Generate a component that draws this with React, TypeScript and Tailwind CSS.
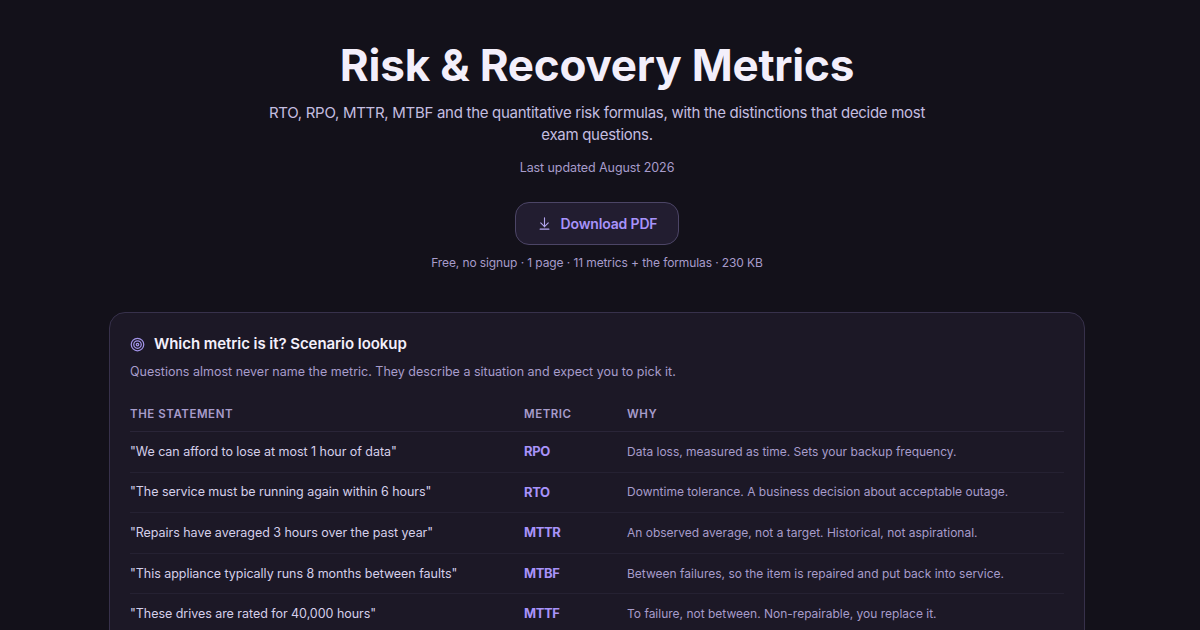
import { ArrowDownToLine, Target } from "lucide-react";

const rows = [
  ['"We can afford to lose at most 1 hour of data"', "RPO", "Data loss, measured as time. Sets your backup frequency."],
  ['"The service must be running again within 6 hours"', "RTO", "Downtime tolerance. A business decision about acceptable outage."],
  ['"Repairs have averaged 3 hours over the past year"', "MTTR", "An observed average, not a target. Historical, not aspirational."],
  ['"This appliance typically runs 8 months between faults"', "MTBF", "Between failures, so the item is repaired and put back into service."],
  ['"These drives are rated for 40,000 hours"', "MTTF", "To failure, not between. Non-repairable, you replace it."],
];

export default function App() {
  return (
    <div className="h-[630px] overflow-hidden bg-[#13111a] pr-[6px] font-['Inter',sans-serif] text-white">
      {/* hero */}
      <div className="flex flex-col items-center pt-[36px]">
        <h1 className="text-[44px] leading-[58px] font-bold tracking-[-0.22px] text-[#f3effb]">Risk &amp; Recovery Metrics</h1>
        <p className="mt-[8px] w-[680px] text-center text-[15px] leading-[22px] tracking-[-0.285px] text-[#c4bee0]">
          RTO, RPO, MTTR, MTBF and the quantitative risk formulas, with the distinctions that decide most exam questions.
        </p>
        <p className="mt-[12px] text-[12.5px] leading-[20px] tracking-[-0.08px] text-[#a79ccb]">Last updated August 2026</p>
        <button className="mt-[24px] flex h-[43px] w-[164px] items-center justify-center gap-[9px] rounded-[14px] border border-[#4c4566] bg-[#221d30] pb-[1px] text-[14px] font-semibold tracking-[-0.15px] text-[#a893fa]">
          <ArrowDownToLine className="h-[15px] w-[15px] text-[#b3a5f0]" strokeWidth={1.75} />
          Download PDF
        </button>
        <p className="mt-[9px] text-[12px] leading-[18px] tracking-[-0.1px] text-[#a79ccb]">Free, no signup · 1 page · 11 metrics + the formulas · 230 KB</p>
      </div>

      {/* scenario card */}
      <div className="mx-auto mt-[40px] w-[976px] rounded-t-[16px] border border-[#37314b] bg-[#1c1826] px-[20px] pt-[20px]">
        <div className="flex items-center gap-[9px]">
          <Target className="h-[15px] w-[15px] text-[#a293e8]" />
          <h2 className="text-[15px] leading-[22px] font-semibold tracking-[-0.06px] text-[#f3effb]">Which metric is it? Scenario lookup</h2>
        </div>
        <p className="mt-[7px] text-[12.5px] leading-[20px] text-[#a79ccb]">Questions almost never name the metric. They describe a situation and expect you to pick it.</p>
        <div className="mt-[23px] grid grid-cols-[394px_103px_1fr] border-b border-[#2a2538] pb-[8px] text-[11.5px] leading-[18px] font-semibold tracking-[0.55px] text-[#a79ccb]">
          <div>THE STATEMENT</div>
          <div>METRIC</div>
          <div>WHY</div>
        </div>
        {rows.map((r) => (
          <div key={r[1]} className="grid h-[40.6px] grid-cols-[394px_103px_1fr] items-center border-b border-[#252132]">
            <div className="pt-[0.6px] text-[12.5px] tracking-[-0.04px] text-[#d5cfea]">{r[0]}</div>
            <div className="text-[13px] font-bold tracking-[-0.4px] text-[#a893fa]">{r[1]}</div>
            <div className="text-[12px] text-[#a79ccb]">{r[2]}</div>
          </div>
        ))}
      </div>
    </div>
  );
}
